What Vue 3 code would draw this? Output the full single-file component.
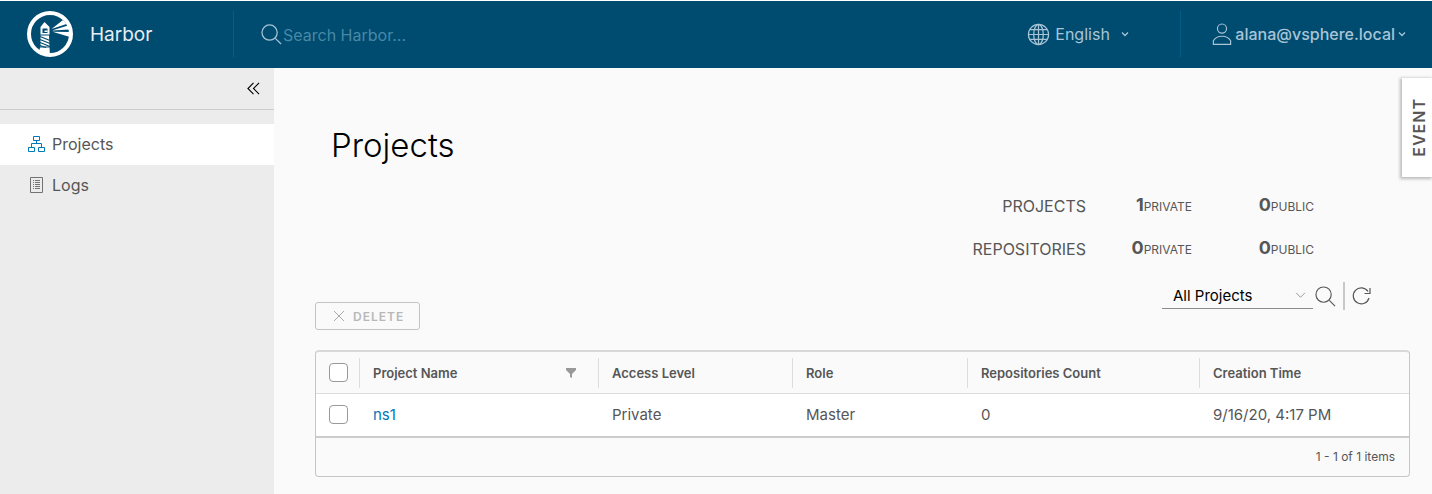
<script setup>
import { ref } from 'vue'

const query = ref('')
const filter = ref('All Projects')
const stats = [
  { label: 'Projects', priv: 1, pub: 0 },
  { label: 'Repositories', priv: 0, pub: 0 },
]
const projects = [
  { name: 'ns1', access: 'Private', role: 'Master', repos: 0, created: '9/16/20, 4:17 PM' },
]
</script>

<template>
  <div class="app">
    <header class="topbar">
      <a class="brand" href="#">
        <svg class="logo" viewBox="0 0 46 46" aria-hidden="true">
          <circle cx="23" cy="23" r="21" fill="none" stroke="#fff" stroke-width="4" />
          <path fill="#fff" d="M17.500 11l5 5v7.500h-9V16z" />
          <path fill="#004b70" d="M15.500 17.500h5v4.500h-5z" />
          <path fill="#fff" d="M17.500 19.500h3v1.500h-3z" />
          <path fill="#fff" d="M13.500 24.500h8.500l.5 11h-9zM13 36.500h9.500l.5 8L12 41z" />
          <path stroke="#004b70" stroke-width="1.200" d="M13 25.500l10 4M13 28.500l10 4M13 31.500l10 4M13 34.500l6 2" />
          <path fill="#fff" d="M24.500 18L36 9l3.500 4zM25 19.500L41 14.500l1.500 4zM25.500 20.700L43 21v5z" />
        </svg>
        <span>Harbor</span>
      </a>
      <label class="search">
        <svg viewBox="0 0 22 22" aria-hidden="true"><circle cx="9" cy="9" r="8" /><path d="M15 15l6 6" /></svg>
        <input v-model="query" type="text" placeholder="Search Harbor..." aria-label="Search Harbor" />
      </label>
      <button class="menu language" type="button">
        <svg class="globe" viewBox="0 0 24 24" aria-hidden="true">
          <circle cx="12" cy="12" r="10.500" /><ellipse cx="12" cy="12" rx="5" ry="10.500" />
          <path d="M12 1.500v21M1.500 12h21M3 7h18M3 17h18" />
        </svg>
        <span>English</span>
        <svg class="caret" viewBox="0 0 8 8" aria-hidden="true"><path d="M1 2.500l3 3 3-3" /></svg>
      </button>
      <button class="menu user" type="button">
        <svg class="person" viewBox="0 0 22 24" aria-hidden="true">
          <circle cx="11" cy="6" r="5" />
          <path d="M1.500 23.500v-4c2-3.500 5.500-5 9.500-5s7.500 1.500 9.500 5v4z" />
        </svg>
        <span>alana@vsphere.local</span>
        <svg class="caret" viewBox="0 0 8 8" aria-hidden="true"><path d="M1 2.500l3 3 3-3" /></svg>
      </button>
    </header>

    <div class="body">
      <aside class="sidebar">
        <div class="collapse">
          <button type="button" aria-label="Collapse navigation">
            <svg viewBox="0 0 14 14" aria-hidden="true"><path d="M7 1L1 7l6 6M13 1L7 7l6 6" /></svg>
          </button>
        </div>
        <nav>
          <a class="active" href="#">
            <svg viewBox="0 0 18 18" stroke="#0079b8" aria-hidden="true">
              <path d="M5.500 1.500h6v4h-6zM.5 12.500h6v4h-6zM10.500 12.500h6v4h-6zM8.500 5.500v3M3.500 12V8.500h10V12" />
            </svg>
            <span>Projects</span>
          </a>
          <a href="#">
            <svg viewBox="0 0 18 18" stroke="#737373" aria-hidden="true">
              <path d="M2.500 1.500h12v15h-12zM5 4.500h1M5 6.500h1M5 8.500h1M5 10.500h1M5 12.500h1M7 4.500h5M7 6.500h5M7 8.500h5M7 10.500h5M7 12.500h5" />
            </svg>
            <span>Logs</span>
          </a>
        </nav>
      </aside>

      <main>
        <h1>Projects</h1>
        <div class="stats">
          <template v-for="s in stats" :key="s.label">
            <span class="kind">{{ s.label }}</span>
            <span class="count"><b>{{ s.priv }}</b>PRIVATE</span>
            <span class="count"><b>{{ s.pub }}</b>PUBLIC</span>
          </template>
        </div>

        <div class="toolbar">
          <button class="delete" type="button" disabled>
            <svg viewBox="0 0 12 12" aria-hidden="true"><path d="M1 1l10 10M11 1L1 11" /></svg>
            <span>DELETE</span>
          </button>
          <div class="tools">
            <div class="select">
              <select v-model="filter" aria-label="Project filter">
                <option>All Projects</option>
                <option>Private Projects</option>
                <option>Public Projects</option>
              </select>
              <svg viewBox="0 0 12 8" aria-hidden="true"><path d="M1 1l5 5 5-5" /></svg>
            </div>
            <button class="find" type="button" aria-label="Search projects">
              <svg viewBox="0 0 22 22" aria-hidden="true"><circle cx="9" cy="9" r="8" /><path d="M15 15l6 6" /></svg>
            </button>
            <button class="refresh" type="button" aria-label="Refresh">
              <svg viewBox="0 0 18 18" aria-hidden="true"><path d="M16 11a8 8 0 1 1-1-6.500M17 1v5.500h-5.500" /></svg>
            </button>
          </div>
        </div>

        <div class="grid">
          <table>
            <colgroup>
              <col class="c-check" /><col class="c-name" /><col class="c-access" /><col class="c-role" /><col class="c-repos" /><col />
            </colgroup>
            <thead>
              <tr>
                <th><div class="cell check"><input type="checkbox" aria-label="Select all projects" /></div></th>
                <th>
                  <div class="cell">
                    <span>Project Name</span>
                    <button type="button" aria-label="Filter by project name">
                      <svg viewBox="0 0 12 10" aria-hidden="true"><path d="M1 0h10v2L7 6v4L5 9V6L1 2z" /></svg>
                    </button>
                  </div>
                </th>
                <th><div class="cell">Access Level</div></th>
                <th><div class="cell">Role</div></th>
                <th><div class="cell">Repositories Count</div></th>
                <th><div class="cell">Creation Time</div></th>
              </tr>
            </thead>
            <tbody>
              <tr v-for="p in projects" :key="p.name">
                <td><div class="check"><input type="checkbox" :aria-label="'Select ' + p.name" /></div></td>
                <td><a href="#">{{ p.name }}</a></td>
                <td>{{ p.access }}</td>
                <td>{{ p.role }}</td>
                <td>{{ p.repos }}</td>
                <td>{{ p.created }}</td>
              </tr>
            </tbody>
          </table>
          <div class="footer">1 - 1 of {{ projects.length }} items</div>
        </div>
        <button class="event" type="button"><span>EVENT</span></button>
      </main>
    </div>
  </div>
</template>

<style>
body {
  background: #fafafa;
}
</style>

<style scoped>
.app {
  display: flex;
  flex-direction: column;
  min-height: 100vh;
  font-family: Metropolis, Inter, "Open Sans", sans-serif;
  font-size: 14px;
  color: #565656;
  background: #fafafa;
}
.app *,
.app {
  box-sizing: border-box;
}
button,
input,
select {
  font: inherit;
  color: inherit;
  background: none;
  border: 0;
  margin: 0;
  padding: 0;
}
a {
  color: inherit;
  text-decoration: none;
}
svg {
  display: block;
  flex: none;
  fill: none;
  overflow: visible;
}
.topbar {
  display: flex;
  align-items: center;
  height: 68px;
  padding-bottom: 1px;
  border-top: 1px solid #fff;
  background: #004b70;
  color: #a8c5d6;
}
.brand {
  display: flex;
  align-items: center;
  gap: 17px;
  width: 233px;
  padding-left: 27px;
  font-size: 19px;
  color: #e6eef3;
}
.logo {
  width: 46px;
  height: 46px;
}
.search {
  display: flex;
  flex: 1;
  align-items: center;
  height: 46px;
  padding-left: 27px;
  border-left: 1px solid #005f87;
}
.search svg,
.find svg {
  width: 21px;
  height: 21px;
}
.topbar svg {
  stroke: #a8c5d6;
  stroke-width: 1.3;
}
.topbar .logo {
  stroke: none;
}
.search input {
  flex: 1;
  min-width: 0;
  outline: 0;
  font-size: 16px;
  padding: 2px 0 0 1px;
}
.search input::placeholder {
  color: #4789a5;
  opacity: 1;
}
.menu {
  display: flex;
  align-items: center;
  height: 46px;
  font-size: 16px;
}
.language {
  width: 153px;
  gap: 5px;
}
.globe {
  width: 23px;
  height: 23px;
}
.language .caret {
  margin-left: 6px;
}
.caret {
  width: 8px;
  height: 8px;
}
.user {
  gap: 3px;
  padding: 0 26px 0 31px;
  border-left: 1px solid #005f87;
  font-weight: 500;
}
.person {
  width: 20px;
  height: 24px;
}
.body {
  display: flex;
  flex: 1;
}
.sidebar {
  width: 274px;
  background: #ececec;
}
.collapse {
  display: flex;
  align-items: center;
  justify-content: flex-end;
  height: 42px;
  padding-right: 14px;
  border-bottom: 1px solid #ccc;
}
.collapse svg {
  width: 13px;
  height: 13px;
  stroke: #000;
  stroke-width: 1.2;
}
nav {
  padding-top: 14px;
}
nav a {
  display: flex;
  align-items: center;
  gap: 6px;
  height: 41px;
  padding: 0 0 1px 28px;
  font-size: 16px;
}
nav .active {
  background: #fff;
}
nav svg {
  width: 18px;
  height: 18px;
}
main {
  position: relative;
  flex: 1;
  min-width: 0;
  padding: 57px 22px 17px 41px;
}
h1 {
  margin: 0 16px;
  font-size: 33px;
  font-weight: 300;
  line-height: 40px;
  color: #000;
}
.stats {
  display: grid;
  grid-template-columns: 1fr 106px 122px;
  grid-auto-rows: 43px;
  align-items: center;
  justify-items: end;
  padding: 18px 96px 0 0;
}
.kind {
  font-size: 16px;
  text-transform: uppercase;
  padding-top: 2px;
}
.count {
  font-size: 12px;
}
.count b {
  font-size: 18px;
  font-weight: 700;
}
.toolbar {
  display: flex;
  align-items: flex-end;
  justify-content: space-between;
  height: 61px;
}
.delete {
  display: flex;
  align-items: center;
  gap: 8px;
  height: 28px;
  padding: 0 15px 0 17px;
  border: 1px solid #c4c4c4;
  border-radius: 3px;
  font-size: 12px;
  font-weight: 600;
  letter-spacing: 1px;
  color: #b8b8b8;
}
.delete svg {
  width: 12px;
  height: 12px;
  stroke: #aaa;
}
.tools {
  display: flex;
  align-items: center;
  padding: 0 39px 20px 0;
}
.select {
  position: relative;
  width: 151px;
  border-bottom: 1px solid #8c8c8c;
}
.select select {
  display: block;
  appearance: none;
  width: 100%;
  height: 25px;
  padding: 0 24px 0 11px;
  font-size: 15px;
  color: #000;
}
.select svg {
  position: absolute;
  right: 7px;
  top: 9px;
  width: 11px;
  height: 7px;
  stroke: #8c8c8c;
  pointer-events: none;
}
.find {
  padding: 0 7px 0 2px;
}
.find svg,
.refresh svg {
  stroke: #565656;
  stroke-width: 1.2;
}
.refresh {
  display: flex;
  align-items: center;
  height: 28px;
  padding-left: 8px;
  border-left: 2px solid #c8c8c8;
}
.refresh svg {
  width: 18px;
  height: 18px;
}
.grid {
  margin-top: 20px;
  border: 1px solid #c6c6c6;
  border-top: 2px solid #d8d8d8;
  border-radius: 4px;
}
table {
  width: 100%;
  table-layout: fixed;
  border-collapse: separate;
  border-spacing: 0;
}
.c-check {
  width: 44px;
}
.c-name {
  width: 239px;
}
.c-access {
  width: 194px;
}
.c-role {
  width: 175px;
}
.c-repos {
  width: 232px;
}
th {
  height: 42px;
  padding: 0;
  border-bottom: 1px solid #dcdcdc;
  font-size: 13px;
  font-weight: 600;
  text-align: left;
}
.cell {
  display: flex;
  align-items: center;
  justify-content: space-between;
  height: 30px;
  padding: 0 21px 0 13px;
  border-right: 1px solid #ddd;
}
th:last-child .cell {
  border-right: 0;
}
.cell svg {
  width: 12px;
  height: 10px;
  fill: #999;
}
td {
  height: 42px;
  padding: 0 13px 1px;
  background: #fff;
  font-size: 15px;
}
td:first-child {
  padding: 0 0 1px;
}
td a {
  color: #0079b8;
}
.check {
  display: flex;
  align-items: center;
  padding: 0 0 0 13px;
}
.check input {
  appearance: none;
  width: 19px;
  height: 19px;
  border: 1px solid #999;
  border-radius: 4px;
  background: #fff;
}
.check input:checked {
  background: #0079b8;
}
.footer {
  display: flex;
  align-items: center;
  justify-content: flex-end;
  height: 40px;
  padding: 0 14px 2px;
  border-top: 2px solid #ccc;
  font-size: 12px;
}
.event {
  position: absolute;
  top: 10px;
  right: 0;
  display: flex;
  align-items: center;
  justify-content: center;
  width: 30px;
  height: 99px;
  padding-left: 3px;
  background: #fff;
  box-shadow: -1px 1px 3px 1px #bbb;
  font-size: 16px;
  font-weight: 600;
  letter-spacing: 1px;
}
.event span {
  writing-mode: vertical-rl;
  transform: rotate(180deg);
}
</style>
